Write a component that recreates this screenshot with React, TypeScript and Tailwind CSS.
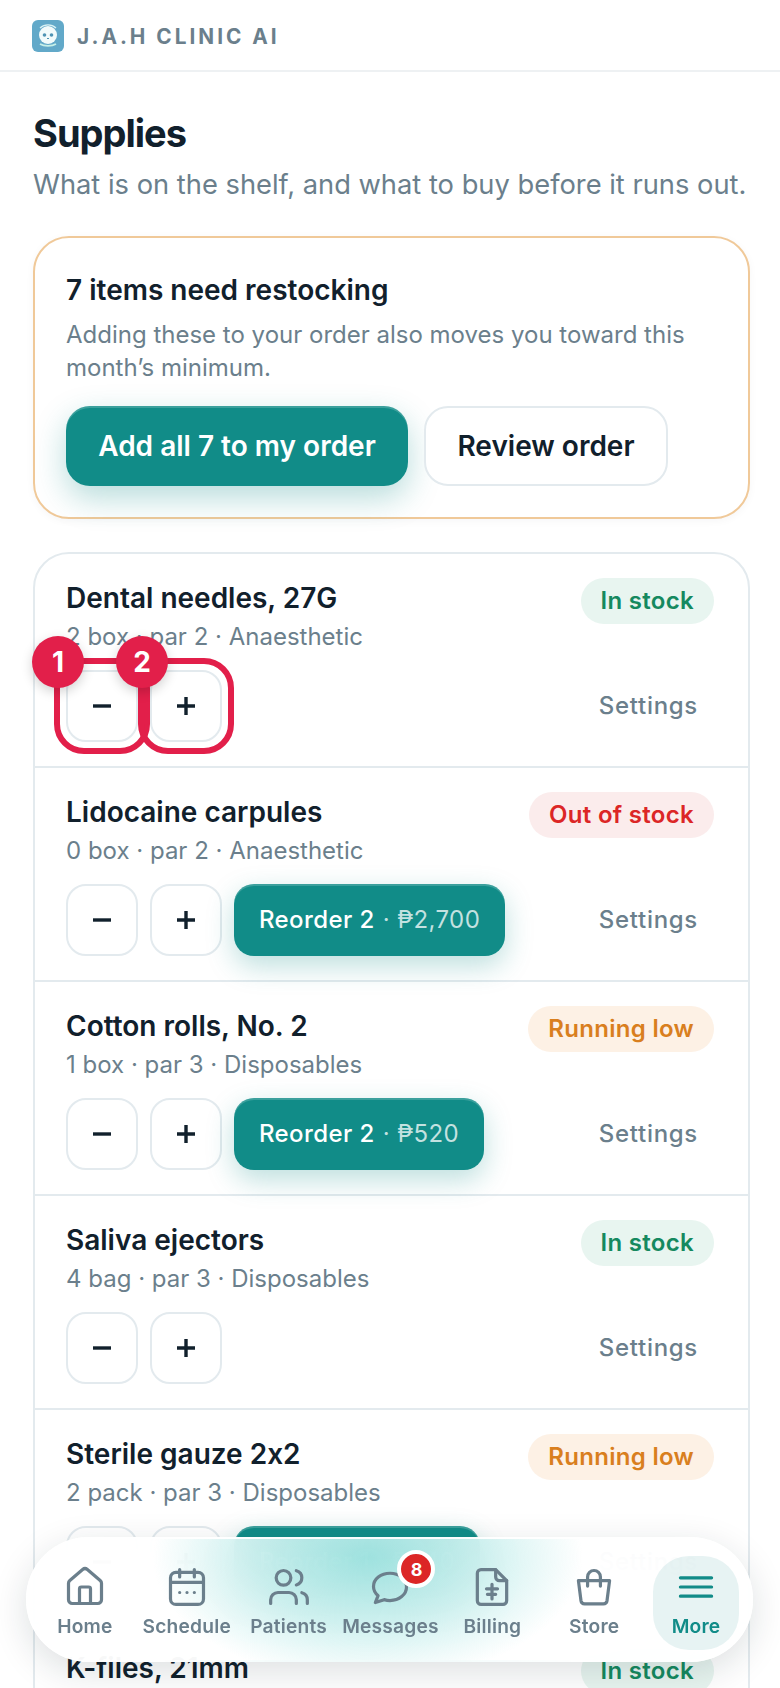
import { Users } from "lucide-react";
import type { ReactNode } from "react";

type Status = "In stock" | "Out of stock" | "Running low";

type Supply = {
  name: string;
  meta: string;
  status: Status;
  reorder?: [string, string];
};

const supplies: Supply[] = [
  { name: "Dental needles, 27G", meta: "2 box · par 2 · Anaesthetic", status: "In stock" },
  { name: "Lidocaine carpules", meta: "0 box · par 2 · Anaesthetic", status: "Out of stock", reorder: ["Reorder 2", "₱2,700"] },
  { name: "Cotton rolls, No. 2", meta: "1 box · par 3 · Disposables", status: "Running low", reorder: ["Reorder 2", "₱520"] },
  { name: "Saliva ejectors", meta: "4 bag · par 3 · Disposables", status: "In stock" },
  { name: "Sterile gauze 2x2", meta: "2 pack · par 3 · Disposables", status: "Running low", reorder: ["Reorder 1", "₱540"] },
  { name: "K-files, 21mm", meta: "3 box · par 2 · Endodontic", status: "In stock" },
];

function StatusBadge({ status }: { status: Status }) {
  if (status === "Out of stock") {
    return <span className="-mt-[3px] flex h-[46px] items-center rounded-full bg-[#fbecec] px-5 text-[24px] font-semibold tracking-[0.3px] text-[#dc2626]">{status}</span>;
  }
  if (status === "Running low") {
    return <span className="-mt-[3px] flex h-[46px] items-center rounded-full bg-[#fdf1e5] px-5 text-[24px] font-semibold tracking-[0.3px] text-[#d97f1e]">{status}</span>;
  }
  return <span className="-mt-[3px] flex h-[46px] items-center rounded-full bg-[#e8f5f0] px-5 text-[24px] font-semibold tracking-[0.3px] text-[#15895f]">{status}</span>;
}

function StepButton({ children }: { children: ReactNode }) {
  return (
    <button className="flex h-[72px] w-[72px] items-center justify-center rounded-[20px] border-2 border-[#e3eaee] bg-white text-[#11202c]">
      {children}
    </button>
  );
}

function Callouts() {
  return (
    <>
      <div className="absolute left-[-12px] top-[-12px] h-[96px] w-[96px] rounded-[30px] border-[6px] border-[#e21f4a]" />
      <div className="absolute left-[72px] top-[-12px] h-[96px] w-[96px] rounded-[30px] border-[6px] border-[#e21f4a]" />
      <div className="absolute left-[-34px] top-[-34px] flex h-[52px] w-[52px] items-center justify-center rounded-full bg-[#e21f4a] text-[28px] font-bold text-white shadow-[0_4px_12px_rgba(0,0,0,0.18)]">1</div>
      <div className="absolute left-[50px] top-[-34px] flex h-[52px] w-[52px] items-center justify-center rounded-full bg-[#e21f4a] text-[28px] font-bold text-white shadow-[0_4px_12px_rgba(0,0,0,0.18)]">2</div>
    </>
  );
}

function SupplyRow({ item, first }: { item: Supply; first: boolean }) {
  return (
    <div className={first ? "h-[212px] pl-[31px] pr-[34px] pt-[27px]" : "h-[214px] border-t-2 border-[#e3eaee] pl-[31px] pr-[34px] pt-[27px]"}>
      <div className="flex items-start justify-between">
        <div>
          <div className="text-[28px] font-semibold leading-[34px] text-[#11202c]">{item.name}</div>
          <div className="mt-[6px] text-[24px] leading-[32px] text-[#6b7f8c]">{item.meta}</div>
        </div>
        <StatusBadge status={item.status} />
      </div>
      <div className="relative mt-[17px] flex items-center">
        <div className="flex gap-3">
          <StepButton>
            <svg width="22" height="22" viewBox="0 0 22 22"><path d="M2 11h18" stroke="currentColor" strokeWidth="3.4" /></svg>
          </StepButton>
          <StepButton>
            <svg width="22" height="22" viewBox="0 0 22 22"><path d="M2 11h18M11 2v18" stroke="currentColor" strokeWidth="3.4" /></svg>
          </StepButton>
        </div>
        {item.reorder && (
          <button className="ml-3 flex h-[72px] items-center rounded-[20px] bg-[#118c88] px-[25px] text-[24px] font-medium tracking-[0.4px] text-white shadow-[0_10px_28px_rgba(17,140,136,0.28),inset_0_2px_0_rgba(255,255,255,0.18)]">
            {item.reorder[0]}
            <span className="ml-2 font-normal text-white/75">· {item.reorder[1]}</span>
          </button>
        )}
        <button className="ml-auto pr-4 text-[24px] font-medium tracking-[0.7px] text-[#6b7f8c]">Settings</button>
        {first && <Callouts />}
      </div>
    </div>
  );
}

function LogoMark() {
  return (
    <div className="flex h-8 w-8 items-center justify-center rounded-[6px] bg-[#62a9c9]">
      <svg width="28" height="28" viewBox="0 0 28 28" fill="none">
        <circle cx="14" cy="13" r="9" fill="#f2fbfb" />
        <path d="M6 6a12 12 0 0 1 16 0" stroke="#d8f2f4" strokeWidth="1.3" />
        <circle cx="10.5" cy="13" r="1.8" fill="#4f94b4" />
        <circle cx="17.5" cy="13" r="1.8" fill="#4f94b4" />
        <path d="M13 16.5h2" stroke="#4f94b4" strokeWidth="1.2" />
        <path d="M6 22c4 2.4 12 2.4 16 0" stroke="#c7f0e8" strokeWidth="1.8" />
      </svg>
    </div>
  );
}

function NavIcon({ children }: { children: ReactNode }) {
  return (
    <svg width="44" height="44" viewBox="0 0 24 24" fill="none" stroke="currentColor" strokeWidth="1.75" strokeLinecap="round" strokeLinejoin="round">
      {children}
    </svg>
  );
}

function NavItem({ label, children }: { label: string; children: ReactNode }) {
  return (
    <div className="flex flex-col items-center text-[#6b7f8c]">
      <div className="relative flex h-[44px] items-center justify-center">{children}</div>
      <span className="mt-[5px] text-[19.2px] font-semibold leading-[24px] tracking-[0.2px]">{label}</span>
    </div>
  );
}

function BottomNav() {
  return (
    <nav className="absolute left-[26px] top-[1537px] grid h-[125px] w-[727px] grid-cols-7 rounded-[62px] border-2 border-white/80 bg-[radial-gradient(ellipse_215px_125px_at_47%_15%,rgba(95,208,203,0.56),rgba(95,208,203,0.28)_55%,transparent),linear-gradient(rgba(255,255,255,0.93),rgba(255,255,255,0.93))] pl-[6px] pr-[4px] pt-[26px] shadow-[0_10px_36px_rgba(15,32,44,0.14)] backdrop-blur-[30px]">
      <NavItem label="Home">
        <NavIcon>
          <path d="M15 21v-8a1 1 0 0 0-1-1h-4a1 1 0 0 0-1 1v8" />
          <path d="M3 10a2 2 0 0 1 .709-1.528l7-6a2 2 0 0 1 2.582 0l7 6A2 2 0 0 1 21 10v9a2 2 0 0 1-2 2H5a2 2 0 0 1-2-2z" />
        </NavIcon>
      </NavItem>
      <NavItem label="Schedule">
        <NavIcon>
          <path d="M8 2.5v4M16 2.5v4M3.5 9.5h17" />
          <rect x="3" y="4" width="18" height="17.5" rx="3" />
          <path d="M8 15h.01M12 15h.01M16 15h.01" />
        </NavIcon>
      </NavItem>
      <NavItem label="Patients">
        <Users size={44} strokeWidth={1.75} />
      </NavItem>
      <NavItem label="Messages">
        <NavIcon>
          <path d="M12 4.5c-5 0-9 3.2-9 7.2 0 2 1 3.7 2.5 5L4 20.5l4.8-1.6c1 .3 2.1.5 3.2.5 5 0 9-3.3 9-7.4s-4-7.5-9-7.5z" />
        </NavIcon>
        <span className="absolute left-[29px] top-[-15px] flex h-[38px] w-[38px] items-center justify-center rounded-full border-[4px] border-white bg-[#dc2626] text-[18px] font-bold text-white">8</span>
      </NavItem>
      <NavItem label="Billing">
        <NavIcon>
          <path d="M14 2.5H6a2 2 0 0 0-2 2v15a2 2 0 0 0 2 2h12a2 2 0 0 0 2-2V8.5z" />
          <path d="M14 2.5v4a2 2 0 0 0 2 2h4" />
          <path d="M12 10.5v8M9 13h6M9.5 16h4.5" />
        </NavIcon>
      </NavItem>
      <NavItem label="Store">
        <NavIcon>
          <path d="M3.5 8.5h17l-1.4 11a2 2 0 0 1-2 1.7H6.9a2 2 0 0 1-2-1.7z" />
          <path d="M8.5 11.5V6.5a3.5 3.5 0 0 1 7 0v5" />
        </NavIcon>
      </NavItem>
      <div className="relative flex flex-col items-center text-[#118c88]">
        <div className="absolute left-[8px] top-[-9px] h-[94px] w-[86px] rounded-[36px] bg-[#118c88]/10" />
        <NavIcon>
          <path d="M3.5 7h17M3.5 12h17M3.5 17h17" />
        </NavIcon>
        <span className="relative mt-[5px] text-[19.2px] font-semibold leading-[24px] tracking-[0.2px]">More</span>
      </div>
    </nav>
  );
}

export default function App() {
  return (
    <div className="relative h-[1688px] w-[780px] overflow-hidden bg-white font-[Inter,sans-serif] [font-feature-settings:'calt'_0]">
      <header className="flex h-[72px] items-center gap-[13px] border-b-2 border-[#eef1f3] pl-8 pt-[2px]">
        <LogoMark />
        <span className="pt-[1px] text-[20.8px] font-bold tracking-[3px] text-[#6b7f8c]">J.A.H CLINIC AI</span>
      </header>

      <main className="pl-[33px] pr-[30px]">
        <h1 className="mt-[38px] text-[38px] font-bold leading-[46px] tracking-[-1px] text-[#11202c]">Supplies</h1>
        <p className="mt-[9px] whitespace-nowrap text-[27.3px] leading-[40px] text-[#6b7f8c]">What is on the shelf, and what to buy before it runs out.</p>

        <section className="mt-[31px] h-[283px] rounded-[36px] border-2 border-[#f0c999] bg-white px-[31px] pt-[34px] shadow-[0_2px_8px_rgba(15,32,44,0.04)]">
          <h2 className="text-[28px] font-semibold leading-[36px] text-[#11202c]">7 items need restocking</h2>
          <p className="mt-[10px] text-[24px] leading-[33px] text-[#6b7f8c]">Adding these to your order also moves you toward this month’s minimum.</p>
          <div className="mt-[22px] flex gap-4">
            <button className="flex h-[80px] w-[342px] items-center justify-center rounded-[24px] bg-[#118c88] text-[28px] font-semibold text-white shadow-[0_12px_32px_rgba(17,140,136,0.3),inset_0_2px_0_rgba(255,255,255,0.18)]">Add all 7 to my order</button>
            <button className="flex h-[80px] w-[244px] items-center justify-center rounded-[24px] border-2 border-[#e3eaee] bg-white text-[28px] font-semibold text-[#11202c]">Review order</button>
          </div>
        </section>

        <section className="mt-[33px] rounded-[36px] border-2 border-[#e3eaee] bg-white">
          {supplies.map((item, i) => (
            <SupplyRow key={item.name} item={item} first={i === 0} />
          ))}
        </section>
      </main>

      <BottomNav />
    </div>
  );
}
